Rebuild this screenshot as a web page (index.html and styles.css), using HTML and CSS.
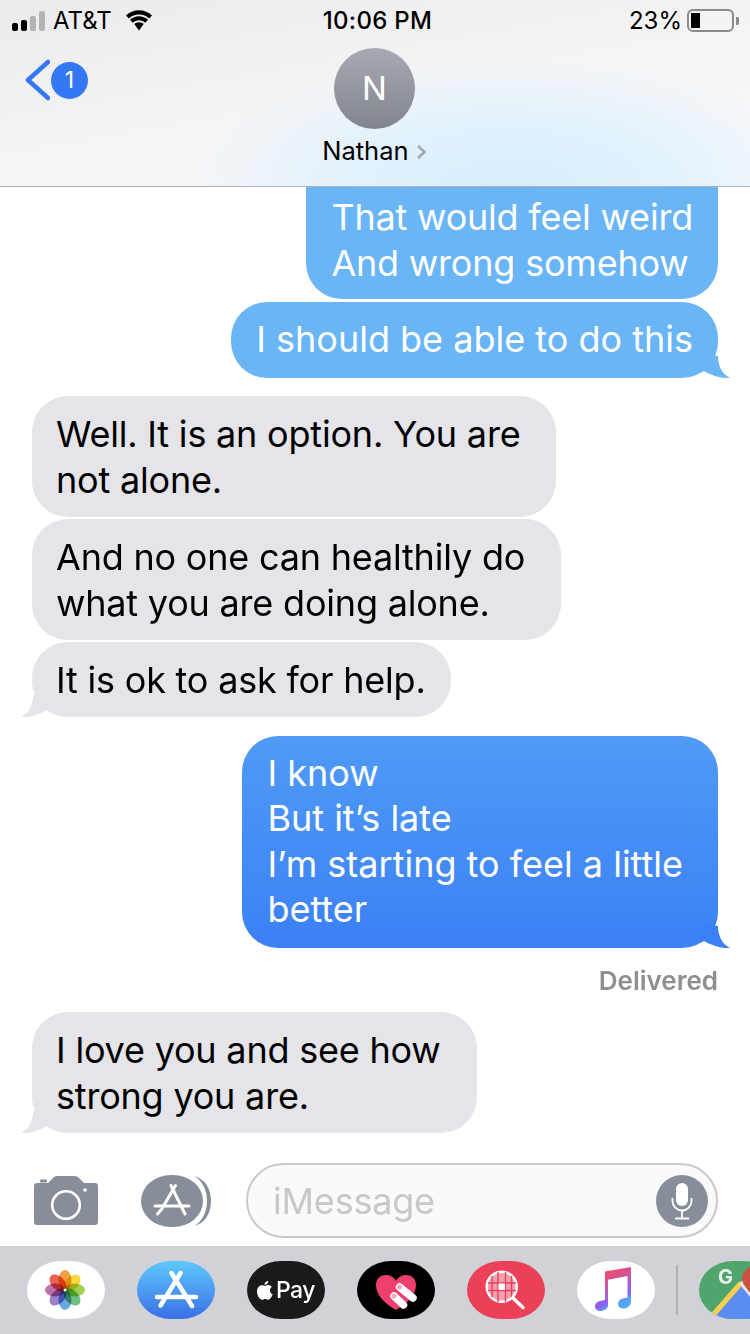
FILE: index.html
```html
<!DOCTYPE html>
<html lang="en">
<head>
    <meta charset="UTF-8">
    <meta name="viewport" content="width=device-width, initial-scale=1.0">
    <title>Nathan - Messages</title>
    <link rel="stylesheet" href="styles.css">
</head>
<body>
    <div class="phone">
        <header class="top">
            <div class="status">
                <div class="status-left">
                    <span class="signal"><i class="on s1"></i><i class="on s2"></i><i class="s3"></i><i class="s4"></i></span>
                    <span class="carrier">AT&amp;T</span>
                    <svg class="wifi" width="28" height="21" viewBox="0 0 28 21">
                        <path d="M14 4.500c4 0 7.500 1.500 10.200 4l2.800-2.900C23.600 2.300 19 .3 14 .3S4.400 2.300 1 5.600l2.800 2.900c2.700-2.500 6.200-4 10.200-4z"/>
                        <path d="M14 10.300c2.400 0 4.500.9 6.200 2.400l2.800-2.900C20.600 7.600 17.500 6.200 14 6.200S7.400 7.600 5 9.800l2.800 2.900c1.700-1.500 3.800-2.400 6.200-2.400z"/>
                        <path d="M14 12.200c-1.900 0-3.500.7-4.700 1.800l4.700 6.500 4.700-6.500c-1.200-1.100-2.800-1.800-4.700-1.800z"/>
                    </svg>
                </div>
                <div class="clock">10:06 PM</div>
                <div class="status-right">
                    <span class="percent">23%</span>
                    <span class="battery"><span class="battery-level"></span></span>
                    <span class="battery-tip"></span>
                </div>
            </div>
            <nav class="nav">
                <div class="back">
                    <svg width="26" height="42" viewBox="0 0 26 42"><path d="M24 3 4 21l20 18" fill="none" stroke="#3478f6" stroke-width="4.500" stroke-linecap="round" stroke-linejoin="round"/></svg>
                    <span class="badge">1</span>
                </div>
                <div class="contact">
                    <div class="avatar">N</div>
                    <div class="name">Nathan <svg width="11" height="16" viewBox="0 0 11 16"><path d="M2 2l6.500 6L2 14" fill="none" stroke="#a3a5aa" stroke-width="2.500"/></svg></div>
                </div>
            </nav>
        </header>

        <main class="thread">
            <div class="bubble sent pale first">That would feel weird<br>And wrong somehow</div>
            <div class="bubble sent pale tight loose">I should be able to do this
                <svg class="tail" viewBox="0 0 30 22"><path d="M0 0H18C18 10 22 18 30 22 20 22.500 11 19 4 15L0 17Z"/></svg>
            </div>
            <div class="bubble got gap roomy">Well. It is an option. You are<br>not alone.</div>
            <div class="bubble got tight roomy">And no one can healthily do<br>what you are doing alone.</div>
            <div class="bubble got tight">It is ok to ask for help.
                <svg class="tail" viewBox="0 0 30 22"><path d="M0 0H18C18 10 22 18 30 22 20 22.500 11 19 4 15L0 17Z"/></svg>
            </div>
            <div class="bubble sent deep gap roomy loose">I know<br>But it’s late<br>I’m starting to feel a little<br>better
                <svg class="tail" viewBox="0 0 30 22"><path d="M0 0H18C18 10 22 18 30 22 20 22.500 11 19 4 15L0 17Z"/></svg>
            </div>
            <div class="delivered">Delivered</div>
            <div class="bubble got roomy">I love you and see how<br>strong you are.
                <svg class="tail" viewBox="0 0 30 22"><path d="M0 0H18C18 10 22 18 30 22 20 22.500 11 19 4 15L0 17Z"/></svg>
            </div>
        </main>

        <section class="compose">
            <svg class="camera" width="64" height="49" viewBox="0 0 64 49">
                <path fill="#888e99" d="M3 7h11l4-4q2-3 5-3h18q3 0 5 3l4 4h11q3 0 3 3v36q0 3-3 3H3q-3 0-3-3V10q0-3 3-3z"/>
                <rect x="6" y="3.500" width="7" height="3" rx="1" fill="#888e99"/>
                <circle cx="32" cy="29" r="13.800" fill="none" stroke="#fff" stroke-width="2.600"/>
                <circle cx="51" cy="14" r="1.800" fill="#fff"/>
            </svg>
            <svg class="apps" width="70" height="52" viewBox="0 0 70 52">
                <path d="M53 1c12 3 17 14 17 25s-5 22-17 25c9-5 13-15 13-25S62 6 53 1z" fill="#888e99"/>
                <rect width="62" height="52" rx="30" ry="26" fill="#888e99"/>
                <g stroke="#fff" stroke-width="3" stroke-linecap="round">
                    <path d="M30 10.500 44 39"/>
                    <path d="M34.500 10.500 22.500 31"/>
                    <path d="M21.300 33.500 16.500 39"/>
                    <path d="M14 31H48"/>
                </g>
            </svg>
            <div class="input">
                <span class="placeholder">iMessage</span>
                <span class="mic">
                    <svg width="24" height="38" viewBox="0 0 24 38">
                        <rect x="6" y="1" width="12" height="23" rx="6" fill="#fff"/>
                        <path d="M2.500 16v3a9.500 9.500 0 0 0 19 0v-3M12 29v7M5 36.500h14" fill="none" stroke="#fff" stroke-width="1.800"/>
                    </svg>
                </span>
            </div>
        </section>

        <footer class="dock">
            <span class="pill white">
                <svg width="78" height="58" viewBox="0 0 78 58">
                    <ellipse class="petal" cx="38" cy="19" rx="6.500" ry="10" fill="#f0a040"/>
                    <ellipse class="petal" cx="38" cy="19" rx="6.500" ry="10" fill="#f5d840" transform="rotate(45 38 29)"/>
                    <ellipse class="petal" cx="38" cy="19" rx="6.500" ry="10" fill="#a5cf55" transform="rotate(90 38 29)"/>
                    <ellipse class="petal" cx="38" cy="19" rx="6.500" ry="10" fill="#6fc080" transform="rotate(135 38 29)"/>
                    <ellipse class="petal" cx="38" cy="19" rx="6.500" ry="10" fill="#68a8e0" transform="rotate(180 38 29)"/>
                    <ellipse class="petal" cx="38" cy="19" rx="6.500" ry="10" fill="#9a80c8" transform="rotate(225 38 29)"/>
                    <ellipse class="petal" cx="38" cy="19" rx="6.500" ry="10" fill="#c070a8" transform="rotate(270 38 29)"/>
                    <ellipse class="petal" cx="38" cy="19" rx="6.500" ry="10" fill="#e86050" transform="rotate(315 38 29)"/>
                    <circle cx="38" cy="29" r="1.500" fill="#fff"/>
                </svg>
            </span>
            <span class="pill store">
                <svg width="78" height="58" viewBox="0 0 78 58">
                    <g stroke="#fff" stroke-width="4.500" stroke-linecap="round" fill="none">
                        <path d="M34.500 12 55 45"/>
                        <path d="M43.500 12 29.500 35"/>
                        <path d="M27.300 38.500 23.500 44.500"/>
                        <path d="M20 36H59"/>
                    </g>
                </svg>
            </span>
            <span class="pill pay">
                <svg width="16" height="19" viewBox="0 0 17 20"><path fill="#fff" d="M12 0c.2 1.700-1.600 4.200-4 4C7.700 2.200 9.800.1 12 0zM8.200 5c1 0 2-.9 3.600-.9 1.300 0 2.900.6 4 2.200-3.200 1.900-2.700 6.300.9 7.700-.8 2.300-2.800 5.800-4.700 5.800-1.200 0-1.900-.8-3.300-.8s-2.200.8-3.300.8C3 19.800 0 15.300 0 11 0 6.800 2.700 4.300 5.100 4.300c1.300 0 2.300.7 3.100.7z"/></svg>
                <span class="pay-text">Pay</span>
            </span>
            <span class="pill heart">
                <svg width="78" height="58" viewBox="0 0 78 58">
                    <path d="M39 49C28 43 19 34 19 24c0-7 5-10 10-10 4 0 8 2 10 6 2-4 6-6 10-6 5 0 10 3 10 10 0 10-9 19-20 25z" fill="#ee3f6e"/>
                    <path d="M42.500 26 56 37" stroke="#fff" stroke-width="7.500" stroke-linecap="round"/>
                    <path d="M37 35l9.500 9" stroke="#fff" stroke-width="7.500" stroke-linecap="round"/>
                    <circle cx="42.500" cy="26" r="2.500" fill="#f7a8bc"/>
                    <circle cx="37" cy="35" r="2.500" fill="#f7a8bc"/>
                </svg>
            </span>
            <span class="pill search">
                <svg width="78" height="58" viewBox="0 0 78 58">
                    <circle cx="34.700" cy="25.700" r="15" fill="#f4a0ae" stroke="#fff" stroke-width="2.500"/>
                    <path d="M25 15v21M31 11v30M38.500 11v30M44.500 15v21M21 22h28M21 29.500h28" stroke="#ec4058" stroke-width="1.400"/>
                    <rect x="31.500" y="22.500" width="6.500" height="6.500" fill="#fff"/>
                    <path d="M46 37l10 9.500" stroke="#fff" stroke-width="3.500" stroke-linecap="round"/>
                </svg>
            </span>
            <span class="pill white">
                <svg width="78" height="58" viewBox="0 0 78 58">
                    <defs>
                        <linearGradient id="note" x1="0" y1="0" x2=".4" y2="1">
                            <stop offset=".1" stop-color="#ee4d66"/>
                            <stop offset=".35" stop-color="#e05080"/>
                            <stop offset=".6" stop-color="#b060c8"/>
                            <stop offset=".82" stop-color="#8a60f0"/>
                            <stop offset=".95" stop-color="#55a8f8"/>
                        </linearGradient>
                    </defs>
                    <path fill="url(#note)" d="M28 10.500 54 6v34c0 4.500-3 7-6.500 7.500-4 .5-6.500-1.500-6.500-4.500s2.500-5 6-5.700l3.500-.8V15L31 18.700V44c0 3.500-3 5.500-6.500 6-4 .5-6.500-1.500-6.500-4.500s2.500-5 6-5.700l4-.9z"/>
                </svg>
            </span>
            <span class="divider"></span>
            <span class="pill maps">
                <svg width="78" height="58" viewBox="0 0 78 58">
                    <path d="M12 58 42 22l36 36z" fill="#5b8df0"/>
                    <path d="M14 54 42 22" stroke="#f7cf4f" stroke-width="5"/>
                    <path d="M43 20l22 26" stroke="#e8e8e8" stroke-width="8"/>
                    <text x="19" y="23" class="maps-g">G</text>
                    <path d="M62 3C52 3 43 9 43 18c0 7 12 17 19 26 7-9 16-19 16-26 0-9-6-15-16-15z" fill="#c9533f"/>
                    <circle cx="60" cy="15" r="7" fill="#8a3a30"/>
                </svg>
            </span>
        </footer>
    </div>
</body>
</html>
```

FILE: styles.css
```css
* {
    box-sizing: border-box;
}
html, body {
    margin: 0;
    padding: 0;
}
body {
    font-family: Inter, 'Liberation Sans', sans-serif;
    background: white;
}
.phone {
    width: 750px;
    height: 1334px;
    display: flex;
    flex-direction: column;
    overflow: hidden;
}

/* top bar */
.top {
    position: relative;
    z-index: 2;
    height: 187px;
    flex: none;
    border-bottom: 1px solid #b0b1b4;
    background:
        radial-gradient(330px 130px at 510px 186px, #d6eefe 0%, rgba(220,240,254,0.75) 50%, rgba(240,246,250,0) 100%),
        linear-gradient(170deg, #ebebed 0%, #f4f4f5 50%, #f9f9fa 100%);
}
.status {
    height: 40px;
    padding: 1px 11px 0 12px;
    display: grid;
    grid-template-columns: 1fr auto 1fr;
    align-items: center;
    font-size: 24px;
    color: black;
}
.status-left {
    display: flex;
    align-items: center;
}
.signal {
    display: flex;
    align-items: flex-end;
    gap: 3px;
    height: 21px;
    margin-right: 8px;
}
.signal i {
    width: 6px;
    border-radius: 2px;
    background: #b2b3b5;
}
.signal .on {
    background: black;
}
.s1 { height: 8px; }
.s2 { height: 11px; }
.s3 { height: 15px; }
.s4 { height: 20px; }
.carrier {
    margin-right: 13px;
}
.wifi {
    display: block;
}
.clock {
    margin-left: 4px;
    font-weight: 500;
    letter-spacing: 0.3px;
}
.status-right {
    display: flex;
    align-items: center;
    justify-content: flex-end;
}
.percent {
    margin-right: 5px;
}
.battery {
    width: 47px;
    height: 23px;
    border: 2px solid #8b8b8d;
    border-radius: 6px;
    padding: 2px;
}
.battery-level {
    display: block;
    width: 9px;
    height: 100%;
    background: black;
}
.battery-tip {
    width: 3px;
    height: 8px;
    margin-left: 2px;
    background: #8b8b8d;
    border-radius: 0 2px 2px 0;
}
.nav {
    margin-top: 8px;
    padding-right: 1px;
    display: grid;
    grid-template-columns: 1fr auto 1fr;
}
.back {
    display: flex;
    align-items: center;
    align-self: start;
    margin: 11px 0 0 24px;
}
.badge {
    width: 37px;
    height: 37px;
    margin-left: 1px;
    border-radius: 50%;
    background: #3478f6;
    color: white;
    font-size: 23px;
    text-align: center;
    line-height: 37px;
}
.contact {
    display: flex;
    flex-direction: column;
    align-items: center;
}
.avatar {
    width: 81px;
    height: 81px;
    border-radius: 50%;
    background: linear-gradient(#a7a9b3, #82848e);
    color: white;
    font-size: 33px;
    text-align: center;
    line-height: 81px;
}
.name {
    margin-top: 6px;
    font-size: 25.5px;
    line-height: 32px;
    color: black;
    white-space: nowrap;
}

/* messages */
.thread {
    flex: 1;
    min-height: 0;
    padding: 0 32px;
    display: flex;
    flex-direction: column;
}
.bubble {
    position: relative;
    width: fit-content;
    padding: 15px 25px;
    border-radius: 36px;
    font-size: 36px;
    line-height: 45.5px;
    letter-spacing: -0.2px;
    white-space: nowrap;
}
/* first bubble is scrolled under the top bar */
.bubble.first {
    margin-top: -38px;
    padding: 46px 25px 13px;
}
.bubble.loose {
    letter-spacing: 0;
}
.bubble.roomy {
    padding-right: 35px;
}
.tight {
    margin-top: 3px;
}
.bubble.got.tight {
    margin-top: 2px;
}
.gap {
    margin-top: 18px;
}
.bubble.deep {
    margin-top: 19px;
}
.sent {
    align-self: flex-end;
    color: white;
}
.pale {
    background: #69b5f6;
    fill: #69b5f6;
}
.deep {
    background: linear-gradient(#4f9bf6, #3c80f5);
    fill: #3c80f5;
}
.got {
    align-self: flex-start;
    padding: 15.5px 25px 13.5px 24px;
    line-height: 46px;
    background: #e4e4e9;
    fill: #e4e4e9;
    color: black;
}
.got.roomy {
    padding-right: 36px;
}
.tail {
    position: absolute;
    bottom: 0;
    right: -12px;
    width: 30px;
    height: 22px;
    overflow: visible;
}
.got .tail {
    right: auto;
    left: -11px;
    transform: scaleX(-1);
}
.delivered {
    align-self: flex-end;
    margin: 17px 0 15px;
    font-size: 26px;
    line-height: 32px;
    font-weight: 600;
    color: #8e8e93;
}

/* compose row */
.compose {
    flex: none;
    height: 83px;
    padding: 0 32px 8px 34px;
    display: flex;
    align-items: center;
}
.camera {
    flex: none;
}
.apps {
    flex: none;
    margin-left: 43px;
}
.input {
    flex: 1;
    height: 75px;
    margin-left: 35px;
    padding: 0 8px 0 25px;
    display: flex;
    align-items: center;
    justify-content: space-between;
    background: #fafafa;
    border: 2px solid #c8c8ce;
    border-radius: 38px;
}
.placeholder {
    font-size: 36px;
    letter-spacing: -0.2px;
    color: #c7c7cc;
}
.mic {
    width: 52px;
    height: 52px;
    border-radius: 50%;
    background: #888e99;
    display: flex;
    align-items: center;
    justify-content: center;
}

/* app dock */
.dock {
    flex: none;
    height: 88px;
    padding: 15px 0 0 27px;
    display: flex;
    gap: 32px;
    align-items: flex-start;
    background: #d1d2d7;
    overflow: hidden;
}
.pill {
    flex: none;
    width: 78px;
    height: 58px;
    border-radius: 34px / 29px;
    display: flex;
    align-items: center;
    justify-content: center;
    overflow: hidden;
}
.white {
    background: white;
}
.petal {
    mix-blend-mode: multiply;
}
.store {
    background: linear-gradient(#5fc8fb, #3a6fe8);
}
.pay {
    background: #1a1a1a;
    color: white;
    gap: 3px;
}
.pay-text {
    font-size: 23px;
    font-weight: 500;
    letter-spacing: -0.5px;
}
.heart {
    background: black;
}
.search {
    background: #ec4058;
}
.maps {
    background: #4fa56b;
}
.maps-g {
    font-size: 20px;
    font-weight: 700;
    fill: #e8f2ec;
}
.divider {
    flex: none;
    width: 2px;
    height: 50px;
    margin: 4px -11px 0 -11px;
    background: #b0b1b5;
}
```
